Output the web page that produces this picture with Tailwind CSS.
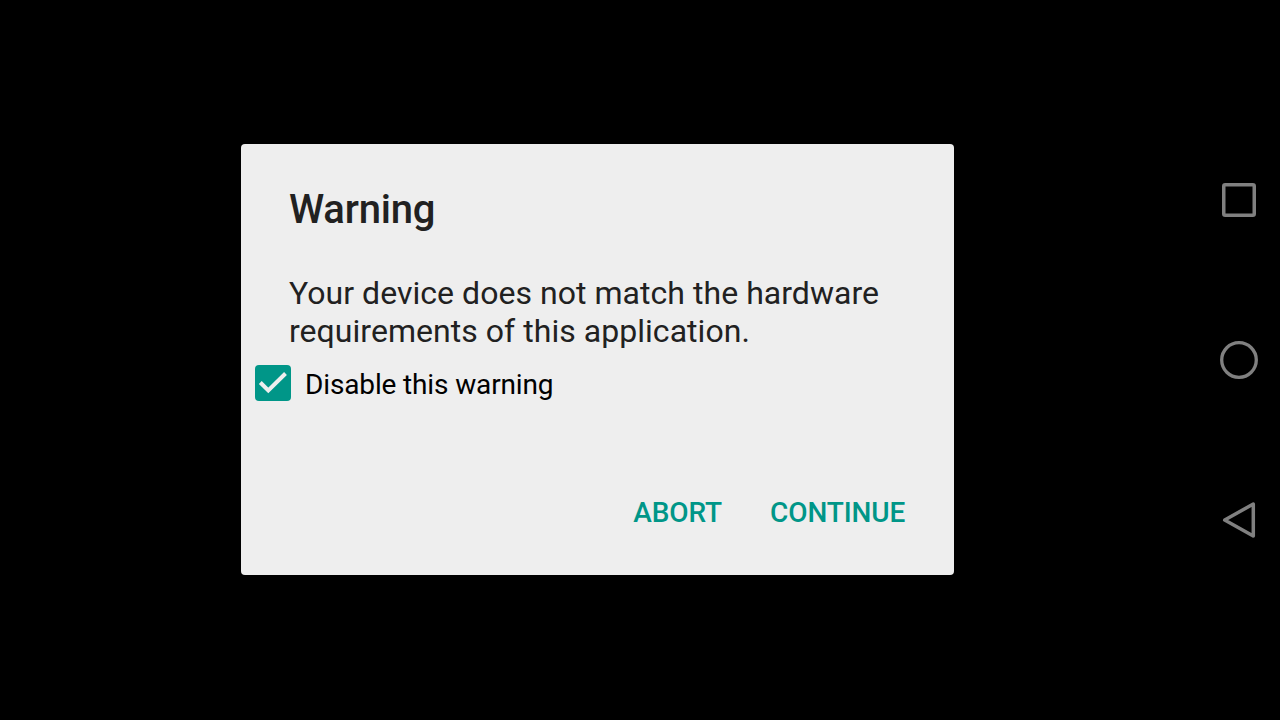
<!DOCTYPE html>
<html lang="en">
<head>
<meta charset="utf-8">
<title>Warning</title>
<script src="https://cdn.jsdelivr.net/npm/@tailwindcss/browser@4"></script>
</head>
<body class="bg-black font-['Roboto',sans-serif]">
<div class="flex h-[720px] w-[1280px] overflow-hidden bg-black">
  <main class="flex w-[1195px] items-start justify-center pt-[144px]">
    <section role="dialog" class="flex h-[431px] w-[713px] flex-col rounded-[4px] bg-[#eeeeee] text-[#212121]">
      <h1 class="ml-12 mt-[42px] h-[47px] whitespace-nowrap text-[40px] leading-[47px] font-medium tracking-[-0.2px]">Warning</h1>
      <p class="ml-12 mt-[41px] whitespace-nowrap text-[32px] leading-[38px] tracking-[0.04px]">Your device does not match the hardware<br>requirements of this application.</p>
      <label class="ml-[14px] mt-[15px] flex h-9 items-center gap-[14px] text-black">
        <svg class="size-9" viewBox="0 0 36 36"><rect width="36" height="36" rx="4" fill="#009688"/><path d="M5.300 17.500L13.300 25.500L30.500 8.500" fill="none" stroke="#eee" stroke-width="4"/></svg>
        <span class="whitespace-nowrap pt-[4px] text-[28px] leading-[34px] tracking-[-0.14px]">Disable this warning</span>
      </label>
      <div class="mt-[95px] flex justify-end gap-12 pr-[48.700px] text-[28px] leading-[34px] font-medium tracking-[-0.1px] text-[#009688]">
        <button>ABORT</button><button>CONTINUE</button>
      </div>
    </section>
  </main>
  <nav class="flex w-[85px] flex-col items-start justify-center gap-[100px] pl-[15px]">
    <svg class="size-[60px]" viewBox="0 0 60 60" fill="none" stroke="#808080" stroke-width="3.500"><rect x="13.750" y="14.750" width="30.500" height="30.500" rx="1.500"/></svg>
    <svg class="size-[60px]" viewBox="0 0 60 60" fill="none" stroke="#808080" stroke-width="3.300"><circle cx="29" cy="30" r="17.300"/></svg>
    <svg class="size-[60px]" viewBox="0 0 60 60" fill="none" stroke="#808080" stroke-width="3.500" stroke-linejoin="round"><path d="M14.700 30L43.300 14V46Z"/></svg>
  </nav>
</div>
</body>
</html>
